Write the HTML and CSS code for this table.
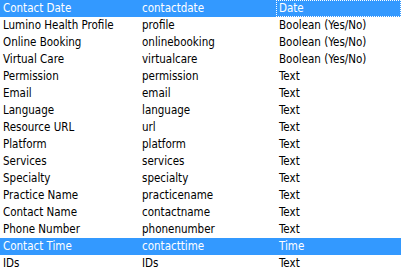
FILE: index.html
```html
<!DOCTYPE html>
<html>
<head>
<meta charset="utf-8">
<link rel="stylesheet" href="styles.css">
</head>
<body>
<div class="list">
  <div class="row selected"><span class="c1">Contact Date</span><span class="c2">contactdate</span><span class="c3 focus">Date</span></div>
  <div class="row"><span class="c1">Lumino Health Profile</span><span class="c2">profile</span><span class="c3">Boolean (Yes/No)</span></div>
  <div class="row"><span class="c1">Online Booking</span><span class="c2">onlinebooking</span><span class="c3">Boolean (Yes/No)</span></div>
  <div class="row"><span class="c1">Virtual Care</span><span class="c2">virtualcare</span><span class="c3">Boolean (Yes/No)</span></div>
  <div class="row"><span class="c1">Permission</span><span class="c2">permission</span><span class="c3">Text</span></div>
  <div class="row"><span class="c1">Email</span><span class="c2">email</span><span class="c3">Text</span></div>
  <div class="row"><span class="c1">Language</span><span class="c2">language</span><span class="c3">Text</span></div>
  <div class="row"><span class="c1">Resource URL</span><span class="c2">url</span><span class="c3">Text</span></div>
  <div class="row"><span class="c1">Platform</span><span class="c2">platform</span><span class="c3">Text</span></div>
  <div class="row"><span class="c1">Services</span><span class="c2">services</span><span class="c3">Text</span></div>
  <div class="row"><span class="c1">Specialty</span><span class="c2">specialty</span><span class="c3">Text</span></div>
  <div class="row"><span class="c1">Practice Name</span><span class="c2">practicename</span><span class="c3">Text</span></div>
  <div class="row"><span class="c1">Contact Name</span><span class="c2">contactname</span><span class="c3">Text</span></div>
  <div class="row"><span class="c1">Phone Number</span><span class="c2">phonenumber</span><span class="c3">Text</span></div>
  <div class="row selected"><span class="c1">Contact Time</span><span class="c2">contacttime</span><span class="c3">Time</span></div>
  <div class="row"><span class="c1">IDs</span><span class="c2">IDs</span><span class="c3">Text</span></div>
</div>
</body>
</html>
```
FILE: styles.css
```css
html, body {
  margin: 0;
  padding: 0;
  background: #ffffff;
}
.list {
  width: 401px;
  height: 280px;
  overflow: hidden;
  font-family: "DejaVu Sans Condensed", "DejaVu Sans", sans-serif;
  font-size: 11.5px;
  color: #000000;
}
.row {
  display: grid;
  grid-template-columns: 139px 137px 1fr;
  height: 17px;
  line-height: 17px;
}
.row span {
  padding-left: 3px;
  white-space: nowrap;
  overflow: hidden;
}
.selected {
  background: #3399ff;
  color: #ffffff;
}
.focus {
  outline: 1px dotted #ffffff;
  outline-offset: -1px;
}
```
